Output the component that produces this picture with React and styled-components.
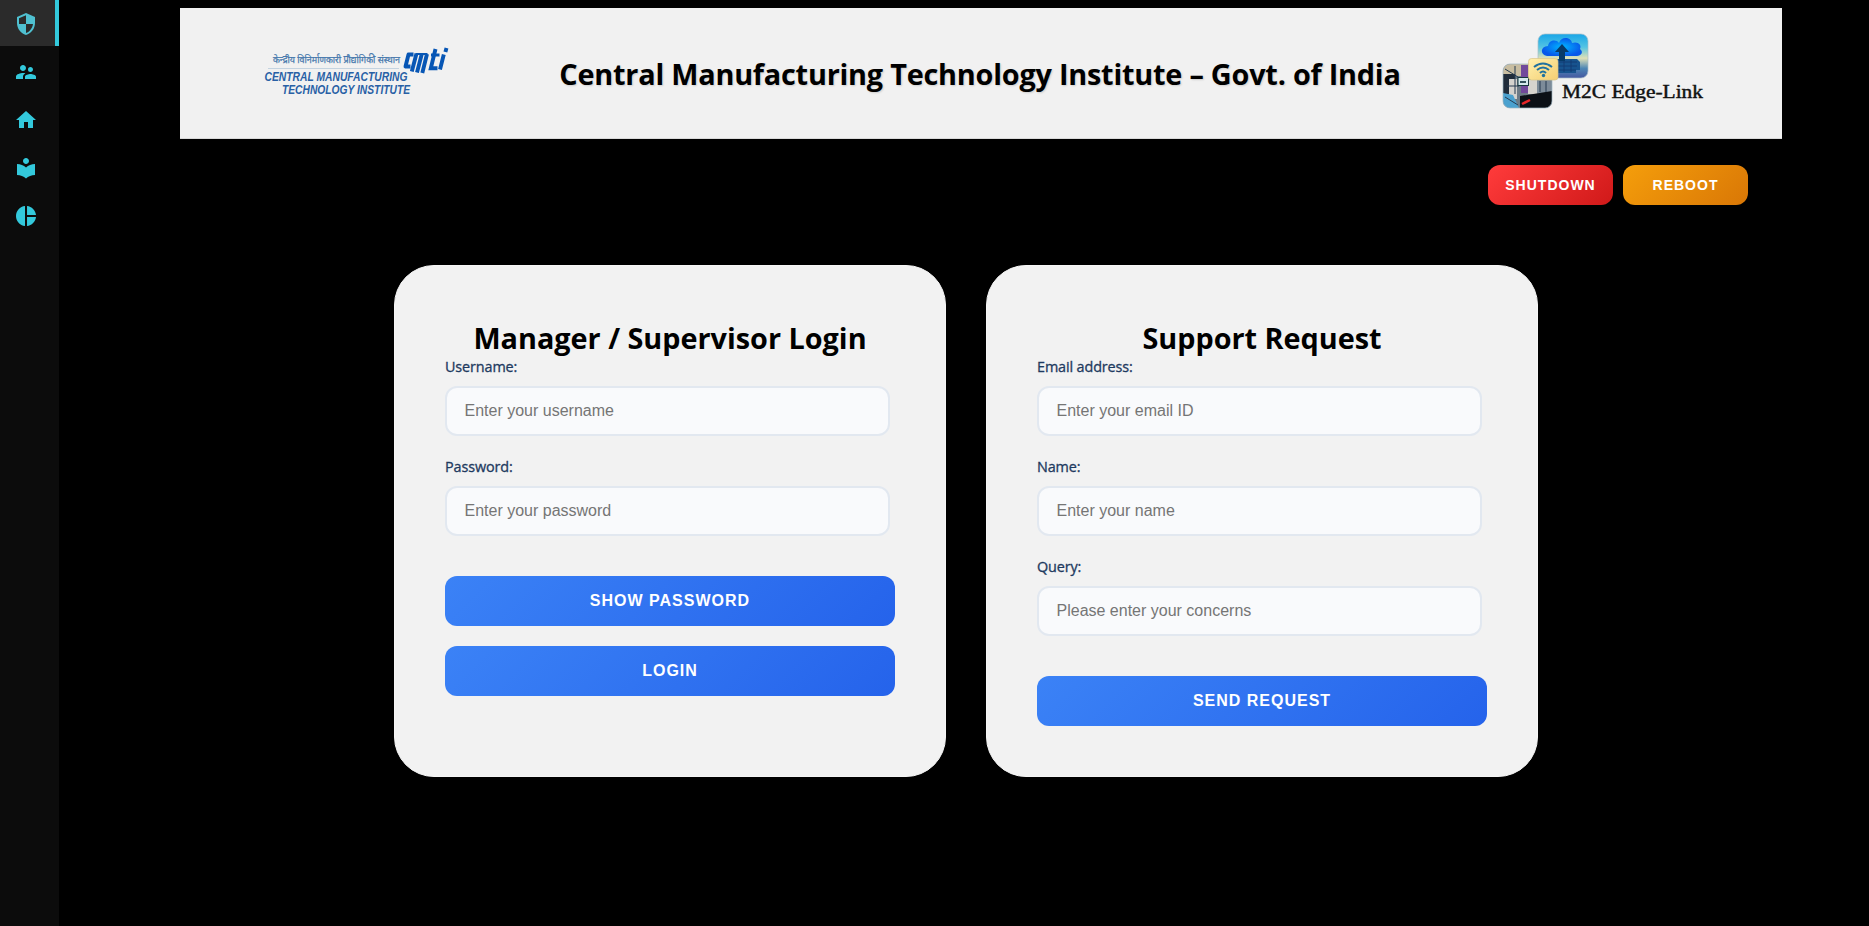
import React from "react";
import styled, { createGlobalStyle } from "styled-components";
import { MdSecurity, MdSupervisorAccount, MdHome, MdLocalLibrary, MdPieChart } from "react-icons/md";

const GlobalStyle = createGlobalStyle`
  * { box-sizing: border-box; }
  body { margin: 0; background: #000; font-family: "Open Sans", "Noto Sans", sans-serif; overflow: hidden; }
`;

const Page = styled.div`
  display: flex;
  height: 926px;
  background: #000;
`;

const Sidebar = styled.nav`
  display: flex;
  flex-direction: column;
  flex: none;
  width: 59px;
  background: #0c0c0c;
`;

const NavItem = styled.a`
  display: flex;
  align-items: center;
  height: 48px;
  padding-left: 14px;
  color: #33c9dc;
  font-size: 24px;
`;

const ActiveNavItem = styled(NavItem)`
  height: 46px;
  margin-bottom: 2px;
  padding-top: 2px;
  background: #2b2b2b;
  border-right: 4px solid #33c9dc;
  color: #4fc0d0;
`;

const Main = styled.main`
  flex: 1;
  display: flex;
  flex-direction: column;
  padding: 8px 87px 0 121px;
`;

const Header = styled.header`
  display: flex;
  align-items: center;
  justify-content: space-between;
  height: 131px;
  padding: 0 76px 0 80px;
  background: #f1f1f1;
  border-bottom: 1px solid #d9d9d9;
`;

const HeaderTitle = styled.h1`
  flex: 1;
  margin: 0;
  padding: 2px 0 0 4px;
  text-align: center;
  white-space: nowrap;
  font-size: 28.8px;
  line-height: 40px;
  letter-spacing: -0.2px;
  font-weight: 700;
  color: #000;
  text-shadow: 1px 1px 2px rgba(0, 0, 0, 0.15);
`;

const Logo = styled.svg`
  display: block;
  flex: none;
`;

const PowerBar = styled.div`
  display: flex;
  justify-content: flex-end;
  gap: 10px;
  padding: 26px 34px 0 0;
`;

const PowerButton = styled.button`
  width: 125px;
  height: 40px;
  padding: 0;
  border: 0;
  border-radius: 12px;
  background: ${(p) => (p.$tone === "danger" ? "linear-gradient(135deg, #ff3b3b, #d01919)" : "linear-gradient(135deg, #f59e0b, #d97706)")};
  color: #fff;
  font: 700 14px "Liberation Sans", sans-serif;
  letter-spacing: 1px;
`;

const Cards = styled.section`
  display: flex;
  gap: 40px;
  padding: 60px 0 0 214px;
`;

const Card = styled.form`
  width: 552px;
  height: 512px;
  padding: 50px;
  border: 1px solid #f6f6f6;
  border-radius: 40px;
  background: #f2f2f2;
`;

const CardTitle = styled.h2`
  margin: 0;
  padding-top: 1px;
  text-align: center;
  white-space: nowrap;
  font-size: 28.8px;
  line-height: 41px;
  font-weight: 700;
  color: #000;
`;

const Field = styled.div`
  display: flex;
  flex-direction: column;
  height: 100px;
`;

const Label = styled.label`
  height: 28px;
  line-height: 18px;
  font-size: 14.4px;
  letter-spacing: -0.12px;
  font-weight: 500;
  color: #1e3a5f;
  -webkit-text-stroke: 0.3px #1e3a5f;
`;

const Input = styled.input`
  width: 445px;
  height: 50px;
  padding: 0 17.5px;
  border: 2px solid #e2e8f0;
  border-radius: 12px;
  background: #f9fafc;
  font: 16px "Liberation Sans", sans-serif;
  &::placeholder { color: #757575; opacity: 1; }
`;

const Actions = styled.div`
  display: flex;
  flex-direction: column;
  gap: 20px;
  padding-top: 18px;
`;

const ActionButton = styled.button`
  height: 50px;
  padding: 0;
  border: 0;
  border-radius: 12px;
  background: linear-gradient(135deg, #3b82f6, #2563eb);
  color: #fff;
  font: 700 16px "Liberation Sans", sans-serif;
  letter-spacing: 1px;
`;

function CmtiLogo() {
  return (
    <Logo width="196" height="60" viewBox="260 43 196 60" fontFamily="Liberation Sans, sans-serif">
      <text x="273" y="63" fontSize="10" fill="#4779ad" stroke="#4779ad" strokeWidth="0.25" fontFamily="Noto Sans, sans-serif" textLength="127" lengthAdjust="spacingAndGlyphs">केन्द्रीय विनिर्माणकारी प्रौद्योगिकी संस्थान</text>
      <path d="M268 68.500H399" stroke="#b9cbdc" strokeWidth="0.800" />
      <g fontSize="13" fontWeight="700" fontStyle="italic" fill="#2860a5">
        <text x="264.500" y="80.700" textLength="143" lengthAdjust="spacingAndGlyphs">CENTRAL MANUFACTURING</text>
        <text x="282" y="94.300" textLength="128" lengthAdjust="spacingAndGlyphs">TECHNOLOGY INSTITUTE</text>
      </g>
      <g fill="none" stroke="#0756b5" strokeWidth="3.900">
        <path d="M413.500 54.500H408.500L405.500 66.500H410.500" strokeLinejoin="round" />
        <path d="M416.500 53.500L411.800 71.500M421.800 54L417 72.500M427 54L422.300 73" />
        <path d="M416 54H427.500" strokeWidth="2" />
        <path d="M435.500 49L430.800 68.300H437.500" />
        <path d="M431 55H439.500" strokeWidth="3" />
        <path d="M443.800 54.500L440 69.500M446.500 48L445.400 52" />
      </g>
    </Logo>
  );
}

function EdgeLinkLogo() {
  return (
    <Logo width="206" height="82" viewBox="1500 32 206 82">
      <defs>
        <linearGradient id="sky" x1="0" y1="0" x2="0" y2="1">
          <stop offset="0" stopColor="#19a6e8" />
          <stop offset="0.300" stopColor="#54c4e3" />
          <stop offset="0.550" stopColor="#dfe0b7" />
          <stop offset="0.780" stopColor="#4c86b5" />
          <stop offset="1" stopColor="#4457a0" />
        </linearGradient>
        <radialGradient id="cloud"><stop offset="0" stopColor="#00b7ff" /><stop offset="1" stopColor="#0758ea" /></radialGradient>
        <linearGradient id="signal" x1="0" y1="0" x2="1" y2="1"><stop offset="0" stopColor="#fff0ad" /><stop offset="1" stopColor="#f4ce72" /></linearGradient>
        <clipPath id="machine"><rect x="1503" y="64" width="49" height="44" rx="7" /></clipPath>
      </defs>
      <rect x="1538" y="34" width="50" height="44" rx="7" fill="url(#sky)" stroke="#a8bfc8" strokeWidth="0.700" />
      <path d="M1548 59h29l3 3v8h-4v3h-26v-4h-3z" fill="#17538e" />
      <path d="M1551 62h26M1550 66h27M1553 70h23M1557 60v12M1564 60v12M1571 60v12" stroke="#13396e" strokeWidth="0.800" />
      <path d="M1547 56c-7-1-7-10 1-10 1-6 8-7 11-3 2-7 12-6 13 0 6-2 10 2 8 6 4 3 1 7-3 7z" fill="url(#cloud)" />
      <path d="M1562 44l7 8h-4v9h-6v-9h-4z" fill="#073a68" />
      <g clipPath="url(#machine)">
        <path fill="#6d7b87" d="M1503 64h49v44h-49z" />
        <path fill="#c8bda1" d="M1503 64h26v12h-26z" />
        <path fill="#202c3a" d="M1503 74h12v20h-12z" />
        <path fill="#71499b" d="M1521 65h7v28h-7z" />
        <path fill="#d5d3ce" d="M1528 80h9v14h-9zM1509 79h8v20h-8z" />
        <path fill="#7c8b99" d="M1537 80h15v14h-15z" />
        <path fill="#0b1016" d="M1520 96l32-5v17h-32z" />
        <path fill="#4ba1cf" d="M1503 93l10 2 6 13h-16z" />
        <path d="M1505 69l13 8M1515 66v28M1507 86h12M1505 97l13 8M1540 81v11M1546 81v11" stroke="#263b50" strokeWidth="1" />
        <path d="M1522 104l8-4" stroke="#e72629" strokeWidth="2.500" />
      </g>
      <rect x="1503" y="64" width="49" height="44" rx="7" fill="none" stroke="#9eb4c1" strokeWidth="0.700" />
      <rect x="1518" y="77.500" width="10.500" height="8" fill="#d4e9ec" stroke="#17383e" />
      <path d="M1520 82h6" stroke="#31515b" strokeWidth="2" />
      <rect x="1528.500" y="58.500" width="29.500" height="21.500" rx="3" fill="url(#signal)" stroke="#d8c58b" strokeWidth="0.700" />
      <g fill="none" stroke="#1f719f" strokeWidth="2">
        <path d="M1534 67q9-7 18 0M1537 70q6-5 12 0M1540 73q3-3 6 0" />
      </g>
      <circle cx="1543.500" cy="75.500" r="1.700" fill="#1f719f" />
      <text x="1562" y="97.500" fontFamily="Liberation Serif, serif" fontSize="19.500" fill="#111" stroke="#111" strokeWidth="0.450" textLength="141" lengthAdjust="spacingAndGlyphs">M2C Edge-Link</text>
    </Logo>
  );
}

const TextField = ({ label, placeholder, type = "text" }) => (
  <Field>
    <Label>{label}</Label>
    <Input type={type} placeholder={placeholder} />
  </Field>
);

export default function App() {
  return (
    <Page>
      <GlobalStyle />
      <Sidebar>
        <ActiveNavItem><MdSecurity /></ActiveNavItem>
        <NavItem><MdSupervisorAccount /></NavItem>
        <NavItem><MdHome /></NavItem>
        <NavItem><MdLocalLibrary /></NavItem>
        <NavItem><MdPieChart /></NavItem>
      </Sidebar>
      <Main>
        <Header>
          <CmtiLogo />
          <HeaderTitle>Central Manufacturing Technology Institute – Govt. of India</HeaderTitle>
          <EdgeLinkLogo />
        </Header>
        <PowerBar>
          <PowerButton type="button" $tone="danger">SHUTDOWN</PowerButton>
          <PowerButton type="button" $tone="warning">REBOOT</PowerButton>
        </PowerBar>
        <Cards>
          <Card>
            <CardTitle>Manager / Supervisor Login</CardTitle>
            <TextField label="Username:" placeholder="Enter your username" />
            <TextField label="Password:" placeholder="Enter your password" type="password" />
            <Actions>
              <ActionButton type="button">SHOW PASSWORD</ActionButton>
              <ActionButton type="button">LOGIN</ActionButton>
            </Actions>
          </Card>
          <Card>
            <CardTitle>Support Request</CardTitle>
            <TextField label="Email address:" placeholder="Enter your email ID" />
            <TextField label="Name:" placeholder="Enter your name" />
            <TextField label="Query:" placeholder="Please enter your concerns" />
            <Actions>
              <ActionButton type="button">SEND REQUEST</ActionButton>
            </Actions>
          </Card>
        </Cards>
      </Main>
    </Page>
  );
}
